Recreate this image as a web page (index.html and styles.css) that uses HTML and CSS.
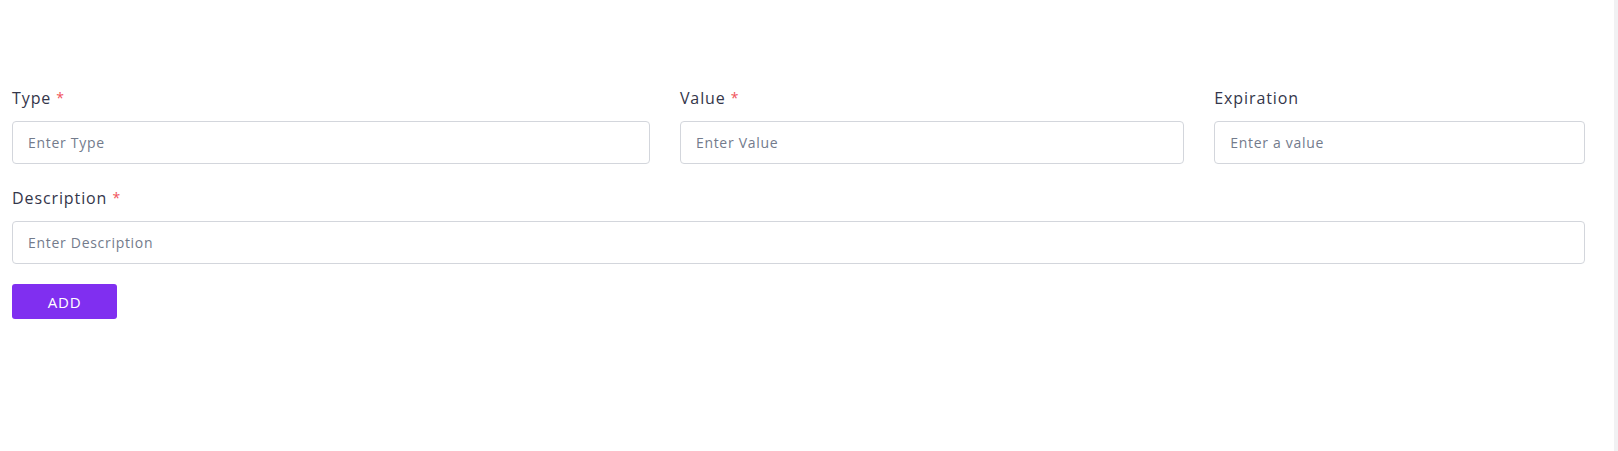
FILE: index.html
```html
<!DOCTYPE html>
<html lang="en">
<head>
<meta charset="utf-8">
<title>Add entry</title>
<link rel="stylesheet" href="styles.css">
</head>
<body>
<div class="page">
  <main class="main">
    <form class="form">
      <div class="grid">
        <div class="field span-5">
          <label class="label">Type <span class="req">*</span></label>
          <input class="input" type="text" placeholder="Enter Type">
        </div>
        <div class="field span-4">
          <label class="label">Value <span class="req">*</span></label>
          <input class="input" type="text" placeholder="Enter Value">
        </div>
        <div class="field span-3">
          <label class="label">Expiration</label>
          <input class="input" type="text" placeholder="Enter a value">
        </div>
        <div class="field span-12 row2">
          <label class="label">Description <span class="req">*</span></label>
          <input class="input" type="text" placeholder="Enter Description">
        </div>
      </div>
      <button class="btn" type="button">ADD</button>
    </form>
  </main>
  <div class="scrollbar"></div>
</div>
</body>
</html>
```
FILE: styles.css
```css
* { box-sizing: border-box; }
html, body { margin: 0; padding: 0; height: 100%; }
body {
  font-family: "Open Sans", "Noto Sans", sans-serif;
  background: #ffffff;
  color: #2f3241;
}
.page {
  display: flex;
  height: 451px;
}
.main {
  flex: 1;
  padding: 86px 29px 0 12px;
}
.scrollbar {
  width: 4px;
  background: #f1f1f3;
}
.grid {
  display: grid;
  grid-template-columns: repeat(12, 1fr);
  column-gap: 30px;
}
.span-5 { grid-column: span 5; }
.span-4 { grid-column: span 4; }
.span-3 { grid-column: span 3; }
.span-12 { grid-column: span 12; }
.row2 { margin-top: 22px; }
.field { display: flex; flex-direction: column; }
.label {
  font-size: 16px;
  line-height: 24px;
  height: 24px;
  margin-bottom: 11px;
  letter-spacing: 0.9px;
  color: #34364a;
}
.req {
  color: #f0525a;
  font-size: 14px;
  vertical-align: 1px;
}
.input {
  height: 43px;
  border: 1px solid #d3d6dc;
  border-radius: 4px;
  padding: 0 15px;
  font-family: inherit;
  font-size: 14px;
  letter-spacing: 0.7px;
  color: #2f3241;
  background: #fff;
  outline: none;
}
.input::placeholder { color: #737b8c; }
.btn {
  margin-top: 20px;
  width: 105px;
  height: 35px;
  border: 0;
  border-radius: 3px;
  background: #802ff0;
  color: #ffffff;
  font-family: inherit;
  font-size: 15px;
  font-weight: 500;
  letter-spacing: 0.8px;
  cursor: pointer;
}
```
